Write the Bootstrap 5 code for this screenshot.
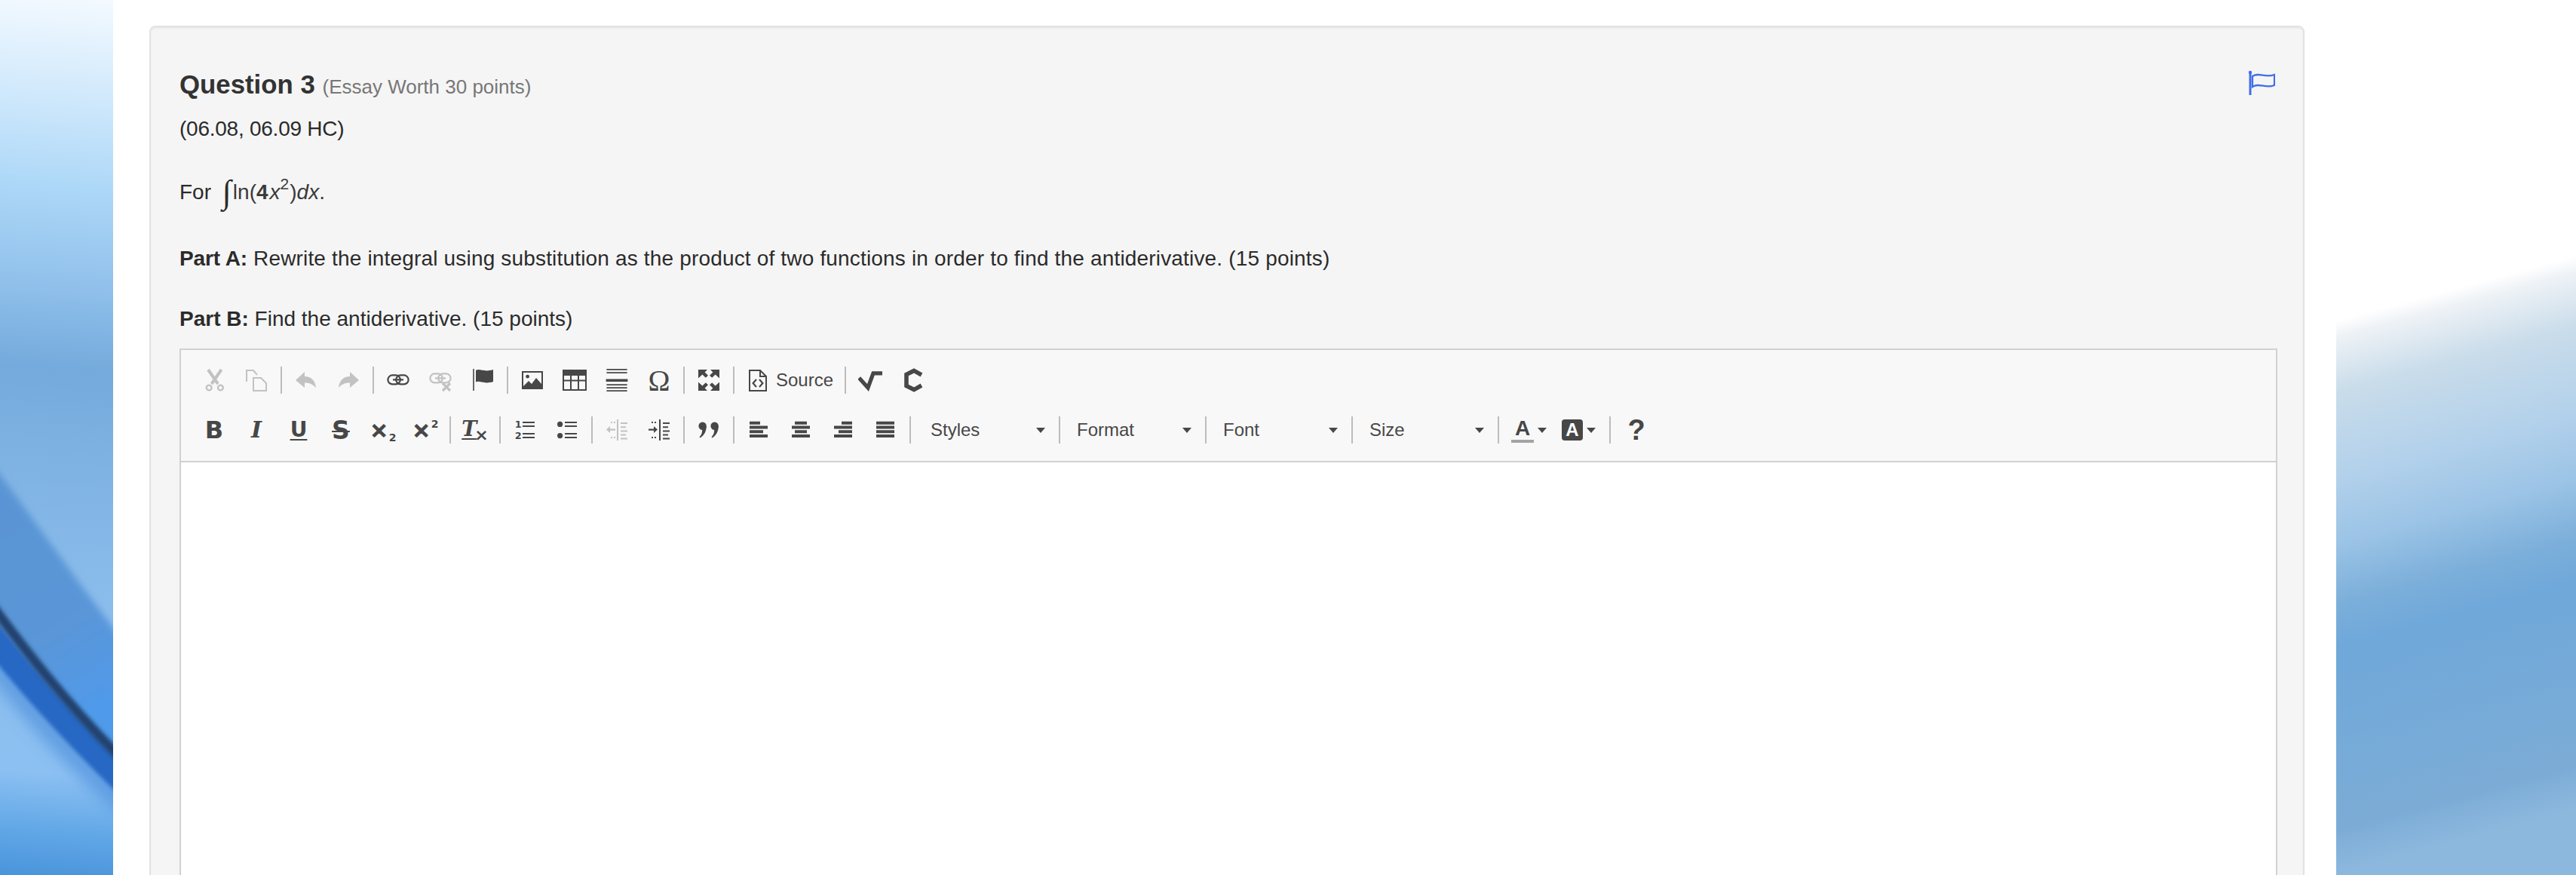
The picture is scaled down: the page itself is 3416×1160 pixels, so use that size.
<!doctype html>
<html lang="en">
<head>
<meta charset="utf-8">
<title>Question 3</title>
<link href="https://cdn.jsdelivr.net/npm/bootstrap@5.3.0/dist/css/bootstrap.min.css" rel="stylesheet">
<style>
html,body{height:1160px;overflow:hidden;background:#fff}
body{font-family:"Liberation Sans",Arial,sans-serif;color:#333;font-size:28px}
.pg{height:1160px}
.side-l{width:150px;flex:none}
.side-r{width:318px;flex:none}
.side-l svg,.side-r svg{display:block}
.mid{flex:1 1 auto;min-width:0;padding:34px 42px 0 48px}
.well-q{background:#f5f5f5;border:2px solid #e3e3e3;border-radius:8px;padding:56px 34px 0 38px;height:1400px;box-shadow:inset 0 2px 2px rgba(0,0,0,.05)}
.q-title{font-size:34.8px;font-weight:700;line-height:40px;margin:0;color:#333}
.q-sub{font-size:26px;font-weight:400;color:#777}
.q-line{line-height:40px;margin:0;color:#2b2b2b;font-size:28px}
.q-flag{width:36px;height:34px;margin-top:1px;margin-right:3px}
.l1{margin-top:16px;letter-spacing:-.25px}.l2{margin-top:42px}.l3{margin-top:46px;letter-spacing:.17px}.l3 strong{letter-spacing:-.1px}.l4{margin-top:40px}
.intg{font-family:"Liberation Serif",serif;font-size:44px;line-height:1;margin:0 2px 0 7px;vertical-align:-5px}
.mth{font-size:28px;color:#3a3a3a}
.mth i{font-family:"Liberation Sans",sans-serif}
.mth i.xv{margin-left:2px}
.mth b{font-weight:700}
.mth sup{font-size:21px;top:-.6em;margin-right:1px}
.ed{margin-top:19px;border:2px solid #d1d1d1;background:#fff;height:900px}
.tb{background:#f8f8f8;border-bottom:2px solid #d1d1d1;padding:7px 0 8px 16px}
.tb-row{height:66px}
.b{width:56px;height:66px;flex:none;color:#474747}
.b svg{display:block}
.off{opacity:.3}
.sp{width:2px;height:36px;background:#bcbcbc;margin:0 4px;flex:none}
.lbl{font-size:24px;color:#474747;line-height:1}
.src{width:138px;justify-content:flex-start;padding-left:11px;gap:8px}
.cmb{width:184px;padding-left:18px;padding-right:13px;justify-content:space-between;flex:none;height:66px}
.cmb-1{width:188px;padding-left:22px}
.arw{width:0;height:0;border-left:6px solid transparent;border-right:6px solid transparent;border-top:7px solid #474747;display:block;flex:none;margin-right:1px}
.g-i{font-family:"DejaVu Serif",serif;font-weight:700;font-style:italic;font-size:30px;line-height:1}
.g-d{font-family:"DejaVu Sans",sans-serif;font-weight:700;font-size:32px;line-height:1}
.g-u{font-family:"DejaVu Sans",sans-serif;font-weight:700;font-size:28px;line-height:1}
.g-u u{text-decoration-thickness:2px;text-underline-offset:3px}
.g-s{text-decoration:line-through;text-decoration-thickness:2px;font-size:33px}
.g-x{font-family:"DejaVu Sans",sans-serif;font-weight:700;font-size:29px;line-height:1;-webkit-text-stroke:1px #474747}
.g-n{font-family:"DejaVu Sans",sans-serif;font-weight:700;font-size:14px;line-height:1}
.g-sub{margin-top:20px;margin-left:1px}
.g-sup{margin-top:-16px;margin-left:1px}
.g-tx{font-family:"DejaVu Serif",serif;font-weight:700;font-style:italic;font-size:27px;line-height:1;margin-top:-4px}
.g-tx u{text-decoration-thickness:2px;text-underline-offset:3px}
.g-tm{font-family:"DejaVu Sans",sans-serif;font-weight:700;font-size:22px;line-height:1;margin:14px 0 0 -3px}
.g-o{font-family:"Liberation Serif",serif;font-size:39px;line-height:1}
.g-q{font-weight:700;font-size:38px;line-height:1;padding-left:4px}
.clr{width:69px;height:66px;flex:none;gap:5px;padding-left:12px;color:#474747}
.clr2{padding-left:10px}
.a-f{display:flex;flex-direction:column;align-items:center;font:700 28px/1 "Liberation Sans",sans-serif;width:30px}
.a-f em{display:block;width:30px;height:4px;background:#a3a3a3;margin-top:1px}
.a-b{display:flex;align-items:center;justify-content:center;width:28px;height:28px;border-radius:4px;background:#474747;color:#fff;font:700 24px/1 "Liberation Sans",sans-serif}
</style>
</head>
<body>
<div class="pg d-flex">
  <div class="side-l">
    <svg width="150" height="1160" viewBox="0 0 150 1160" aria-hidden="true">
      <defs>
        <linearGradient id="lb" gradientUnits="userSpaceOnUse" x1="90" y1="0" x2="0" y2="1160">
          <stop offset="0" stop-color="#f2f9ff"/><stop offset=".1" stop-color="#d3eafc"/><stop offset=".21" stop-color="#aed8f8"/><stop offset=".33" stop-color="#8fbfea"/><stop offset=".42" stop-color="#74aadc"/><stop offset=".52" stop-color="#7eb2e3"/><stop offset=".7" stop-color="#8cbeec"/><stop offset=".88" stop-color="#8cc0f2"/><stop offset=".95" stop-color="#5fa6e6"/><stop offset="1" stop-color="#4a94da"/>
        </linearGradient>
        <linearGradient id="lm" gradientUnits="userSpaceOnUse" x1="0" y1="680" x2="150" y2="930">
          <stop offset="0" stop-color="#5a94d4"/><stop offset=".6" stop-color="#5a96d8"/><stop offset="1" stop-color="#4f9aea"/>
        </linearGradient>
        <filter id="bl0" x="-30%" y="-30%" width="160%" height="160%"><feGaussianBlur stdDeviation="2.5"/></filter>
        <filter id="bl1" x="-30%" y="-30%" width="160%" height="160%"><feGaussianBlur stdDeviation="5"/></filter>
        <filter id="bl2" x="-30%" y="-30%" width="160%" height="160%"><feGaussianBlur stdDeviation="10"/></filter>
      </defs>
      <rect width="150" height="1160" fill="url(#lb)"/>
      <path d="M-30 590C40 680 100 770 180 870V1030C100 950 40 890 -30 810Z" fill="url(#lm)" filter="url(#bl1)"/>
      <path d="M-20 865C45 945 95 1005 170 1068" fill="none" stroke="#4e8fdc" stroke-width="30" filter="url(#bl2)" opacity=".7"/>
      <path d="M-20 832C30 897 90 964 170 1042" fill="none" stroke="#2867c4" stroke-width="34" filter="url(#bl0)"/>
      <path d="M-20 790C30 858 85 930 170 1015" fill="none" stroke="#20426f" stroke-width="13" filter="url(#bl0)"/>
    </svg>
  </div>
  <div class="mid">
    <div class="well-q">
      <div class="d-flex justify-content-between align-items-start">
        <h4 class="q-title">Question 3 <small class="q-sub">(Essay Worth 30 points)</small></h4>
        <svg class="q-flag" viewBox="0 0 36 34" aria-hidden="true" fill="none" stroke="#3f6fe8" stroke-width="2.2"><path d="M3 4V33" stroke-width="3"/><circle cx="3" cy="3" r="2.2" fill="#3f6fe8" stroke="none"/><path d="M6 8C14 2 23 11 35 6V20C24 25 14 16 6 22Z"/></svg>
      </div>
      <p class="q-line l1">(06.08, 06.09 HC)</p>
      <p class="q-line l2">For <span class="intg">∫</span><span class="mth">ln(<b>4</b><i class="xv">x</i><sup>2</sup>)<i>dx</i>.</span></p>
      <p class="q-line l3"><strong>Part A:</strong> Rewrite the integral using substitution as the product of two functions in order to find the antiderivative. (15 points)</p>
      <p class="q-line l4"><strong>Part B:</strong> Find the antiderivative. (15 points)</p>
      <div class="ed">
        <div class="tb">
          <div class="tb-row d-flex align-items-center">
            <div class="b off d-flex align-items-center justify-content-center"><svg width="32" height="32" viewBox="0 0 16 16" fill="none" stroke="currentColor" stroke-width="2"><path d="M4 1L10.5 10.5M12.8 1L6.3 10.5"/><circle cx="4.6" cy="13" r="1.7" stroke-width="1.2"/><circle cx="12.2" cy="13" r="1.7" stroke-width="1.2"/></svg></div>
            <div class="b off d-flex align-items-center justify-content-center"><svg width="32" height="32" viewBox="0 0 16 16" fill="none" stroke="currentColor" stroke-width="1"><path d="M1.5 9V1.5H6L8.5 4.5M6 6.5H11L14.5 10V15H6Z"/></svg></div>
            <span class="sp"></span>
            <div class="b off d-flex align-items-center justify-content-center"><svg width="32" height="32" viewBox="0 0 16 16" fill="currentColor"><path d="M1 8L7 2.5V5.5C11 5.5 14 8 14.5 13C12.5 10.5 10 9.8 7 9.8V13Z"/></svg></div>
            <div class="b off d-flex align-items-center justify-content-center"><svg width="32" height="32" viewBox="0 0 16 16" fill="currentColor"><path d="M15 8L9 2.5V5.5C5 5.5 2 8 1.5 13C3.5 10.5 6 9.8 9 9.8V13Z"/></svg></div>
            <span class="sp"></span>
            <div class="b d-flex align-items-center justify-content-center"><svg width="32" height="32" viewBox="0 0 16 16" fill="none" stroke="currentColor" stroke-width="1.1"><rect x="1.2" y="4.7" width="8.2" height="6" rx="3"/><rect x="6.6" y="4.7" width="8.2" height="6" rx="3"/><path d="M4.5 7.7H11.5"/></svg></div>
            <div class="b off d-flex align-items-center justify-content-center"><svg width="32" height="32" viewBox="0 0 16 16" fill="none" stroke="currentColor" stroke-width="1.1"><rect x="1.2" y="3.7" width="8.2" height="6" rx="3"/><rect x="6.6" y="3.7" width="8.2" height="6" rx="3"/><path d="M4.5 6.7H11.5"/><path d="M9.5 10L14.5 15M14.5 10L9.5 15" stroke-width="1.6"/></svg></div>
            <div class="b d-flex align-items-center justify-content-center"><svg width="32" height="32" viewBox="0 0 16 16" fill="currentColor"><path d="M1.6.5H2.4V15H1.6ZM3.5 1.5C6 0 9 3 15 1V9C9 11 6 8 3.5 9.2Z"/></svg></div>
            <span class="sp"></span>
            <div class="b d-flex align-items-center justify-content-center"><svg width="32" height="32" viewBox="0 0 16 16"><path fill="currentColor" fill-rule="evenodd" d="M1 2H15V14H1ZM2 3V12L5.5 8.5 7.5 10.5 10.5 6.5 14 10.5V3Z"/><circle cx="4.8" cy="5.6" r="1.2" fill="currentColor"/></svg></div>
            <div class="b d-flex align-items-center justify-content-center"><svg width="32" height="32" viewBox="0 0 16 16"><path fill="currentColor" fill-rule="evenodd" d="M0 1H16V15H0ZM1 5V7.8H5V5ZM6 5V7.8H10V5ZM11 5V7.8H15V5ZM1 8.8V14H5V8.8ZM6 8.8V14H10V8.8ZM11 8.8V14H15V8.8Z"/></svg></div>
            <div class="b d-flex align-items-center justify-content-center"><svg width="32" height="32" viewBox="0 0 16 16" fill="currentColor"><path d="M1.2.5H14.8V1.4H1.2ZM1.2 2.6H14.8V3.5H1.2ZM.8 7.3H15.2V9H.8ZM1.2 10.6H14.8V11.5H1.2ZM1.2 12.6H14.8V13.5H1.2ZM1.2 14.6H14.8V15.5H1.2Z"/></svg></div>
            <div class="b d-flex align-items-center justify-content-center"><span class="g-o">Ω</span></div>
            <span class="sp"></span>
            <div class="b d-flex align-items-center justify-content-center"><svg width="32" height="32" viewBox="0 0 16 16" fill="currentColor"><path d="M1 1H7L5.3 2.7 7.5 4.9 5.9 6.4 3.7 4.2 1 6.8ZM15 1H9L10.7 2.7 8.5 4.9 10.1 6.4 12.3 4.2 15 6.8ZM1 15H7L5.3 13.3 7.5 11.1 5.9 9.6 3.7 11.8 1 9.2ZM15 15H9L10.7 13.3 8.5 11.1 10.1 9.6 12.3 11.8 15 9.2Z"/></svg></div>
            <span class="sp"></span>
            <div class="b src d-flex align-items-center"><svg width="32" height="32" viewBox="0 0 16 16" fill="none" stroke="currentColor" stroke-width="1"><path d="M2.5 1.5H9.5L13.5 5.5V15H2.5ZM9.5 1.5V5.5H13.5"/><path d="M7 7.5L4.8 10 7 12.5M9 7.5L11.2 10 9 12.5" stroke-width="1.1"/></svg><span class="lbl">Source</span></div>
            <span class="sp"></span>
            <div class="b d-flex align-items-center justify-content-center"><svg width="32" height="32" viewBox="0 0 16 16" fill="none" stroke="currentColor" stroke-width="2.6"><path d="M.6 6.5L6.5 13 10 3.4H16"/></svg></div>
            <div class="b d-flex align-items-center justify-content-center"><svg width="32" height="32" viewBox="0 0 16 16" fill="none" stroke="currentColor" stroke-width="2.8"><path d="M14 4.5L9 1.7 4 4.2V11.8L9 14.3 14 11.5"/></svg></div>
          </div>
          <div class="tb-row d-flex align-items-center">
            <div class="b d-flex align-items-center justify-content-center"><span class="g-d">B</span></div>
            <div class="b d-flex align-items-center justify-content-center"><span class="g-i">I</span></div>
            <div class="b d-flex align-items-center justify-content-center"><span class="g-u"><u>U</u></span></div>
            <div class="b d-flex align-items-center justify-content-center"><span class="g-d g-s">S</span></div>
            <div class="b d-flex align-items-center justify-content-center"><span class="g-x">×</span><span class="g-n g-sub">2</span></div>
            <div class="b d-flex align-items-center justify-content-center"><span class="g-x">×</span><span class="g-n g-sup">2</span></div>
            <span class="sp"></span>
            <div class="b d-flex align-items-center justify-content-center"><span class="g-tx"><u>T</u></span><span class="g-tm">×</span></div>
            <span class="sp"></span>
            <div class="b d-flex align-items-center justify-content-center"><svg width="32" height="32" viewBox="0 0 16 16" fill="currentColor"><text x="1.4" y="6.6" font-family="DejaVu Sans" font-size="6.4" font-weight="700">1</text><text x="1.4" y="14" font-family="DejaVu Sans" font-size="6.4" font-weight="700">2</text><path d="M6.5 2.5H14.5V3.5H6.5ZM6.5 5H14.5V6H6.5ZM6.5 10H14.5V11H6.5ZM6.5 12.5H14.5V13.5H6.5Z"/></svg></div>
            <div class="b d-flex align-items-center justify-content-center"><svg width="32" height="32" viewBox="0 0 16 16" fill="currentColor"><circle cx="3.3" cy="4.2" r="1.8"/><circle cx="3.3" cy="11.8" r="1.8"/><path d="M6.5 2.5H14.5V3.5H6.5ZM6.5 5H14.5V6H6.5ZM6.5 10H14.5V11H6.5ZM6.5 12.5H14.5V13.5H6.5Z"/></svg></div>
            <span class="sp"></span>
            <div class="b off d-flex align-items-center justify-content-center"><svg width="32" height="32" viewBox="0 0 16 16" fill="currentColor"><path d="M8 1H9V15H8ZM10.5 3H15V4H10.5ZM10.5 5.6H14V6.6H10.5ZM10.5 8.2H15V9.2H10.5ZM10.5 10.8H14V11.8H10.5ZM10.5 13.3H15V14.3H10.5ZM1 7.8L3.5 5.5V7.2H7V8.4H3.5V10ZM4 2.5H5V3.5H4ZM6 2.5H7V3.5H6ZM4 12.5H5V13.5H4ZM6 12.5H7V13.5H6Z"/></svg></div>
            <div class="b d-flex align-items-center justify-content-center"><svg width="32" height="32" viewBox="0 0 16 16" fill="currentColor"><path d="M8 1H9V15H8ZM10.5 3H15V4H10.5ZM10.5 5.6H14V6.6H10.5ZM10.5 8.2H15V9.2H10.5ZM10.5 10.8H14V11.8H10.5ZM10.5 13.3H15V14.3H10.5ZM7 7.8L4.5 5.5V7.2H1V8.4H4.5V10ZM3 2.5H4V3.5H3ZM5 2.5H6V3.5H5ZM3 12.5H4V13.5H3ZM5 12.5H6V13.5H5Z"/></svg></div>
            <span class="sp"></span>
            <div class="b d-flex align-items-center justify-content-center"><svg width="32" height="32" viewBox="0 0 16 16" fill="currentColor"><circle cx="3.8" cy="5.4" r="2.6"/><path d="M6.4 5.2C6.4 9 4.8 11.6 2.2 13.2L1.8 12.6C3 11.4 3.6 10 3.6 8Z"/><circle cx="11.8" cy="5.4" r="2.6"/><path d="M14.4 5.2C14.4 9 12.8 11.6 10.2 13.2L9.8 12.6C11 11.4 11.6 10 11.6 8Z"/></svg></div>
            <span class="sp"></span>
            <div class="b d-flex align-items-center justify-content-center"><svg width="32" height="32" viewBox="0 0 16 16" fill="currentColor"><path d="M2 2H9V4H2ZM2 5H14V7H2ZM2 8H11V10H2ZM2 11H14V13H2Z" transform="translate(0 .5) scale(1 .96)"/></svg></div>
            <div class="b d-flex align-items-center justify-content-center"><svg width="32" height="32" viewBox="0 0 16 16" fill="currentColor"><path d="M4 2H12V4H4ZM2 5H14V7H2ZM4 8H12V10H4ZM2 11H14V13H2Z" transform="translate(0 .5) scale(1 .96)"/></svg></div>
            <div class="b d-flex align-items-center justify-content-center"><svg width="32" height="32" viewBox="0 0 16 16" fill="currentColor"><path d="M7 2H14V4H7ZM2 5H14V7H2ZM5 8H14V10H5ZM2 11H14V13H2Z" transform="translate(0 .5) scale(1 .96)"/></svg></div>
            <div class="b d-flex align-items-center justify-content-center"><svg width="32" height="32" viewBox="0 0 16 16" fill="currentColor"><path d="M2 2H14V4H2ZM2 5H14V7H2ZM2 8H14V10H2ZM2 11H14V13H2Z" transform="translate(0 .5) scale(1 .96)"/></svg></div>
            <span class="sp"></span>
            <div class="cmb cmb-1 d-flex align-items-center"><span class="lbl">Styles</span><span class="arw"></span></div>
            <span class="sp"></span>
            <div class="cmb d-flex align-items-center"><span class="lbl">Format</span><span class="arw"></span></div>
            <span class="sp"></span>
            <div class="cmb d-flex align-items-center"><span class="lbl">Font</span><span class="arw"></span></div>
            <span class="sp"></span>
            <div class="cmb d-flex align-items-center"><span class="lbl">Size</span><span class="arw"></span></div>
            <span class="sp"></span>
            <div class="clr d-flex align-items-center"><span class="a-f">A<em></em></span><span class="arw"></span></div>
            <div class="clr clr2 d-flex align-items-center"><span class="a-b">A</span><span class="arw"></span></div>
            <span class="sp"></span>
            <div class="b d-flex align-items-center justify-content-center"><span class="g-q">?</span></div>
          </div>
        </div>
      </div>
    </div>
  </div>
  <div class="side-r">
    <svg width="318" height="1160" viewBox="0 0 318 1160" aria-hidden="true">
      <defs>
        <linearGradient id="rb" gradientUnits="userSpaceOnUse" x1="0" y1="425" x2="185" y2="1110">
          <stop offset="0" stop-color="#fff"/><stop offset=".03" stop-color="#eef2f6"/><stop offset=".13" stop-color="#c9dcea"/><stop offset=".28" stop-color="#b3d1eb"/><stop offset=".4" stop-color="#9cc4e6"/><stop offset=".51" stop-color="#7cafda"/><stop offset=".59" stop-color="#6fa8da"/><stop offset=".92" stop-color="#7cacd6"/><stop offset="1" stop-color="#8db8de"/>
        </linearGradient>
      </defs>
      <rect width="318" height="1160" fill="url(#rb)"/>
    </svg>
  </div>
</div>
<script src="https://cdn.jsdelivr.net/npm/bootstrap@5.3.0/dist/js/bootstrap.bundle.min.js"></script>
</body>
</html>
